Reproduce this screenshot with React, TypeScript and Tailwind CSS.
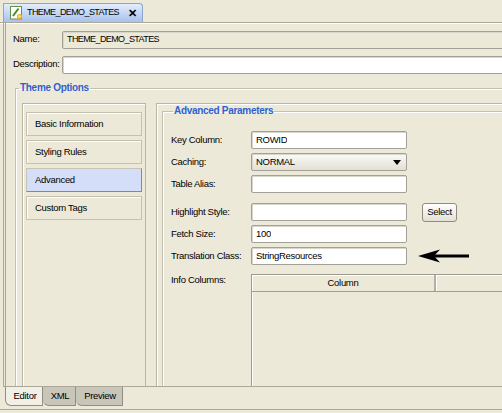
import React from "react";

const inputBox =
  "flex h-[18px] items-center rounded-[2px] border border-[#a3a197] px-[4px] shadow-[inset_1px_1px_0_#d8d6cc]";

function TabIcon() {
  return (
    <svg width="13" height="14" viewBox="0 0 13 14" className="shrink-0">
      <rect x="0.5" y="0.5" width="11" height="12.5" fill="#fff" stroke="#6d8f4a" />
      <path d="M3 10 L8.5 2.5" stroke="#3f8f2a" strokeWidth="2" />
      <circle cx="9.5" cy="10.5" r="2.6" fill="#f2b11d" />
      <circle cx="9.5" cy="10.5" r="1.2" fill="#fde58a" />
    </svg>
  );
}

function Field({
  label,
  value,
  white = true,
  children,
  className = "",
}: {
  label: string;
  value?: string;
  white?: boolean;
  children?: React.ReactNode;
  className?: string;
}) {
  return (
    <div className={`flex h-[18px] items-center ${className}`}>
      <span className="w-[80px] shrink-0">{label}</span>
      <div className={`${inputBox} w-[156px] ${white ? "bg-white" : "bg-[#ece9d8]"}`}>
        <span className="truncate">{value}</span>
      </div>
      {children}
    </div>
  );
}

const NAV = ["Basic Information", "Styling Rules", "Advanced", "Custom Tags"];

export default function App() {
  return (
    <div className="flex h-[413px] w-[502px] flex-col overflow-hidden bg-[#ece9d8] font-['Liberation_Sans',Arial,sans-serif] text-[9.5px] tracking-[-0.3px] text-black">
      {/* document tab */}
      <div className="flex h-[23px] shrink-0 items-end border-b border-[#aca899] pl-[3px] shadow-[0_1px_0_#fff]">
        <div className="flex h-[19px] w-[140px] items-center gap-[4px] rounded-tr-[4px] border border-b-0 border-[#8ea5cc] bg-gradient-to-b from-[#e4edfc] to-[#a8c2ec] pl-[6px]">
          <TabIcon />
          <span className="text-[9px] tracking-[-0.6px]">THEME_DEMO_STATES</span>
          <span className="ml-auto mr-[5px] text-[11px] font-bold leading-none">✕</span>
        </div>
      </div>

      {/* editor */}
      <div className="ml-[3px] flex h-[364px] shrink-0 flex-col overflow-hidden border-b border-l-[3px] border-double border-[#aca899]">
        <div className="mt-[8px] flex h-[17px] items-center">
          <span className="w-[56px] shrink-0 pl-[7px]">Name:</span>
          <div className={`${inputBox} -mr-[4px] h-[17px] flex-1 bg-[#ece9d8] text-[9px] tracking-[-0.6px]`}>
            THEME_DEMO_STATES
          </div>
        </div>
        <div className="mt-[8px] flex h-[17px] items-center">
          <span className="w-[56px] shrink-0 pl-[7px]">Description:</span>
          <div className={`${inputBox} -mr-[4px] h-[17px] flex-1 bg-white`} />
        </div>

        <fieldset className="-mb-[20px] -mr-[20px] ml-[9px] mt-[8px] flex min-h-0 flex-1 flex-col border border-[#c4c1b2] shadow-[inset_1px_1px_0_#fff]">
          <legend className="ml-[3px] px-[1px] text-[10px] font-bold leading-[14px] text-[#2f5fcf]">
            Theme Options
          </legend>
          <div className="flex min-h-0 flex-1 pl-[6px] pt-[8px]">
            {/* navigation list */}
            <div className="flex w-[124px] shrink-0 flex-col gap-[4px] border border-[#b9b6a8] px-[3px] pt-[8px] shadow-[inset_1px_1px_0_#fff]">
              {NAV.map((item) => (
                <div
                  key={item}
                  className={`flex h-[24px] items-center border pl-[8px] ${
                    item === "Advanced"
                      ? "border-[#c7c4b6] border-b-[#8b8a82] border-r-[#8b8a82] bg-[#d5def8]"
                      : "border-[#c4c1b3] shadow-[inset_1px_1px_0_#fff]"
                  }`}
                >
                  {item}
                </div>
              ))}
            </div>

            {/* parameter panel */}
            <div className="ml-[10px] flex min-w-0 flex-1 flex-col border-l border-t border-[#b9b6a8] shadow-[inset_1px_1px_0_#fff]">
              <fieldset className="ml-[5px] flex flex-1 flex-col border border-[#c4c1b2] pl-[8px] shadow-[inset_1px_1px_0_#fff]">
                <legend className="ml-[2px] px-[1px] text-[10px] font-bold leading-[14px] text-[#2f5fcf]">
                  Advanced Parameters
                </legend>
                <div className="mt-[13px] flex flex-col gap-[4px]">
                  <Field label="Key Column:" value="ROWID" />
                  <div className="flex h-[18px] items-center">
                    <span className="w-[80px] shrink-0">Caching:</span>
                    <div className={`${inputBox} w-[156px] bg-gradient-to-b from-[#fbfbf8] to-[#e2dfd3]`}>
                      <span>NORMAL</span>
                      <svg width="8" height="5" viewBox="0 0 8 5" className="ml-auto mr-[1px]">
                        <path d="M0 0 H8 L4 5 Z" fill="#000" />
                      </svg>
                    </div>
                  </div>
                  <Field label="Table Alias:" />
                  <Field label="Highlight Style:" className="mt-[6px]">
                    <button
                      type="button"
                      className="ml-[15px] flex h-[19px] w-[35px] items-center justify-center rounded-[3px] border border-[#8e8c82] bg-gradient-to-b from-white to-[#e3e0d4]"
                    >
                      Select
                    </button>
                  </Field>
                  <Field label="Fetch Size:" value="100" />
                  <Field label="Translation Class:" value="StringResources">
                    <svg width="52" height="14" viewBox="0 0 52 14" className="ml-[11px]">
                      <path d="M51 7 H14" stroke="#000" strokeWidth="3" />
                      <path d="M0 7 L22 0.5 L16 7 L22 13.5 Z" fill="#000" />
                    </svg>
                  </Field>
                  <div className="mt-[5px] flex items-start">
                    <span className="-mt-[1px] w-[80px] shrink-0">Info Columns:</span>
                    <div className="flex h-[140px] flex-1 flex-col border-l border-t border-[#9d9b91] shadow-[inset_1px_1px_0_#fff]">
                      <div className="flex h-[17px] border-b border-[#a19f95]">
                        <div className="flex w-[184px] shrink-0 items-center justify-center border-r-2 border-[#b3b0a3] shadow-[inset_1px_1px_0_#fff]">
                          Column
                        </div>
                        <div className="flex-1 shadow-[inset_1px_1px_0_#fff]" />
                      </div>
                    </div>
                  </div>
                </div>
              </fieldset>
            </div>
          </div>
        </fieldset>
      </div>

      {/* bottom tabs */}
      <div className="flex h-[19px] shrink-0 pl-[5px]">
        <div className="flex w-[38px] items-center justify-center rounded-bl-[6px] border-b border-l border-r border-[#8f8d84] bg-[#f1efe6] pl-[2px]">
          Editor
        </div>
        <div className="flex w-[33px] items-center justify-center rounded-bl-[6px] border-b border-r border-[#8f8d84] bg-[#c8c5b9] pl-[2px]">
          XML
        </div>
        <div className="flex w-[47px] items-center justify-center rounded-bl-[6px] border-b border-r border-[#8f8d84] bg-[#c8c5b9] pl-[2px]">
          Preview
        </div>
      </div>
      <div className="mt-[3px] border-t border-[#aca899] shadow-[inset_0_1px_0_#fff]" />
    </div>
  );
}
